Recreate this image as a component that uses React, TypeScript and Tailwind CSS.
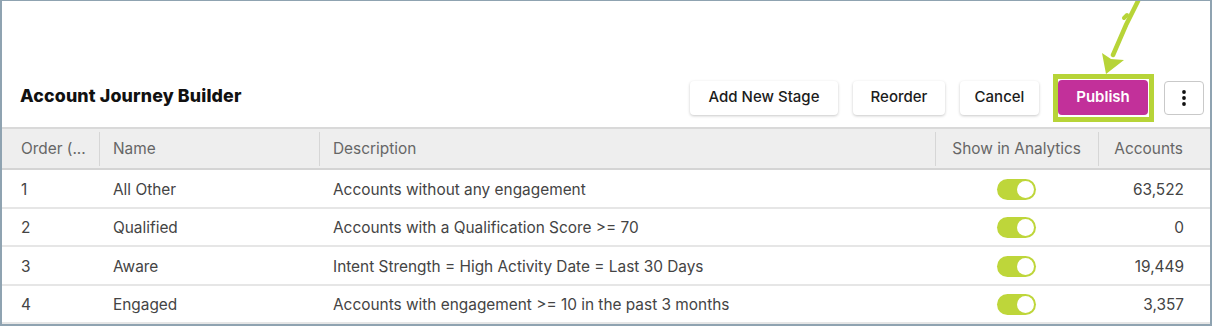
import React from 'react';

type Stage = {
  order: number;
  name: string;
  description: string;
  analytics: boolean;
  accounts: string;
};

const STAGES: Stage[] = [
  { order: 1, name: 'All Other', description: 'Accounts without any engagement', analytics: true, accounts: '63,522' },
  { order: 2, name: 'Qualified', description: 'Accounts with a Qualification Score >= 70', analytics: true, accounts: '0' },
  { order: 3, name: 'Aware', description: 'Intent Strength = High Activity Date = Last 30 Days', analytics: true, accounts: '19,449' },
  { order: 4, name: 'Engaged', description: 'Accounts with engagement >= 10 in the past 3 months', analytics: true, accounts: '3,357' },
];

const Toggle: React.FC<{ on: boolean }> = ({ on }) => (
  <span
    className={`inline-flex items-center w-[39px] h-[21px] rounded-full p-[2px] ${
      on ? 'bg-[#bed63a] justify-end' : 'bg-[#cfcfcf] justify-start'
    }`}
  >
    <span className="block w-[17px] h-[17px] rounded-full bg-white" />
  </span>
);

const ActionButton: React.FC<{ className?: string; children: React.ReactNode }> = ({ className = '', children }) => (
  <button
    className={`h-[34px] rounded-[4px] bg-white text-[15px] font-medium text-[#1c1c1c] shadow-[0_1px_3px_rgba(0,0,0,0.22)] ${className}`}
  >
    {children}
  </button>
);

export default function App() {
  return (
    <div
      className="relative w-[1212px] h-[326px] overflow-hidden bg-white border-t border-l-2 border-r-2 border-b-2 border-[#8fa3b1]"
      style={{ fontFamily: 'Inter, "Noto Sans", sans-serif' }}
    >
      {/* annotation arrow */}
      <svg className="absolute left-[1090px] top-0" width="56" height="80" viewBox="0 0 56 80">
        <path d="M46 0 L34 24 L21 54" stroke="#b7d438" strokeWidth="4.5" strokeLinecap="round" fill="none" />
        <path d="M35 14 L32 17" stroke="#b7d438" strokeWidth="4" strokeLinecap="round" />
        <polygon points="14,73 10,52 19,58 32,59" fill="#b7d438" />
      </svg>

      {/* header */}
      <div className="flex items-end justify-between h-[126px] pl-[18px] pr-[6px] pb-[12px]">
        <h1 className="text-[17.8px] font-extrabold text-[#111] pb-[5px] tracking-[0.15px]">
          Account Journey Builder
        </h1>
        <div className="flex items-center gap-[15px]">
          <ActionButton className="w-[148px]">Add New Stage</ActionButton>
          <ActionButton className="w-[92px]">Reorder</ActionButton>
          <ActionButton className="w-[79px]">Cancel</ActionButton>
          <div className="relative ml-[4px] mr-px">
            <div className="absolute -left-[5px] -right-[6px] -top-[6px] -bottom-[7px] border-[5px] border-[#b7d438]" />
            <button className="relative w-[90px] h-[35px] rounded-[4px] bg-[#c2309a] text-white text-[15px] font-semibold">
              Publish
            </button>
          </div>
          <button className="w-[40px] h-[34px] rounded-[4px] bg-white border border-[#c9c9c9] flex items-center justify-center">
            <svg width="4" height="16" viewBox="0 0 4 16">
              <circle cx="2" cy="2" r="1.9" fill="#111" />
              <circle cx="2" cy="8" r="1.9" fill="#111" />
              <circle cx="2" cy="14" r="1.9" fill="#111" />
            </svg>
          </button>
        </div>
      </div>

      {/* table */}
      <div className="border-t-2 border-[#d9d9d9] text-[15.4px]">
        <div className="flex h-[41px] items-center bg-[#eeeeee] border-b-2 border-[#d4d4d4] text-[#666] pt-px">
          <div className="w-[97px] pl-[19px] truncate">Order (...</div>
          <div className="w-[220px] pl-[13px] border-l border-[#d6d6d6] h-[34px] flex items-center">Name</div>
          <div className="w-[616px] pl-[13px] border-l border-[#d6d6d6] h-[34px] flex items-center">Description</div>
          <div className="w-[163px] pr-[17px] border-l border-[#d6d6d6] h-[34px] flex items-center justify-end">Show in Analytics</div>
          <div className="flex-1 pr-[27px] border-l border-[#d6d6d6] h-[34px] flex items-center justify-end">Accounts</div>
        </div>
        {STAGES.map((s) => (
          <div key={s.order} className="flex h-[38.5px] items-center border-b-2 border-[#e6e6e6] text-[#444] pt-[2px]">
            <div className="w-[97px] pl-[19px]">{s.order}</div>
            <div className="w-[220px] pl-[14px]">{s.name}</div>
            <div className="w-[616px] pl-[14px]">{s.description}</div>
            <div className="w-[163px] flex justify-center">
              <Toggle on={s.analytics} />
            </div>
            <div className="flex-1 pr-[26px] text-right">{s.accounts}</div>
          </div>
        ))}
      </div>
    </div>
  );
}
